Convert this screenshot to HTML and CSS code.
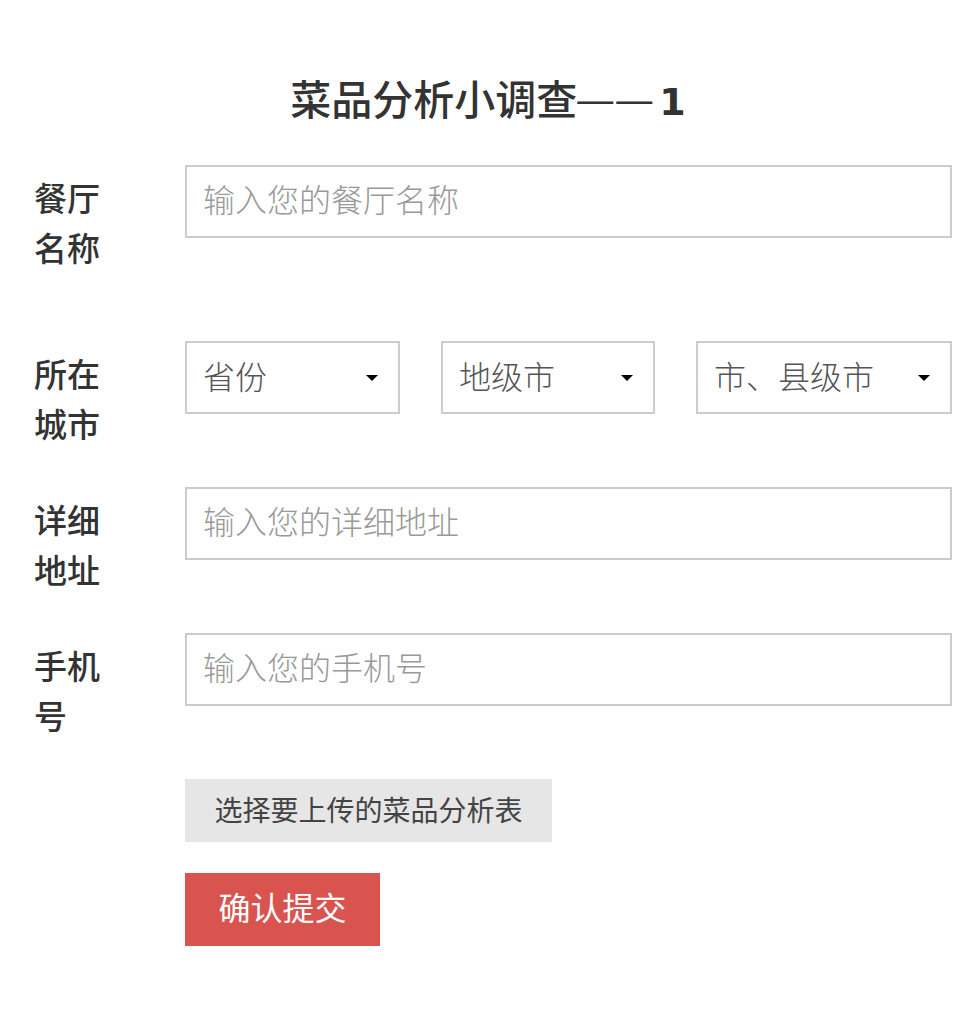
FILE: index.html
```html
<!DOCTYPE html>
<html lang="zh-CN">
<head>
<meta charset="utf-8">
<title>菜品分析小调查</title>
<link rel="stylesheet" href="styles.css">
</head>
<body>
<div class="page">
  <h1 class="title">菜品分析小调查<span class="title-dash">—</span><span class="title-dash">—</span><span class="title-num">1</span></h1>
  <form class="form">
    <div class="row row-first">
      <label class="label">餐厅名称</label>
      <input class="input" type="text" placeholder="输入您的餐厅名称">
    </div>
    <div class="row">
      <label class="label">所在城市</label>
      <div class="selects">
        <div class="select"><span>省份</span><span class="caret"></span></div>
        <div class="select"><span>地级市</span><span class="caret"></span></div>
        <div class="select"><span>市、县级市</span><span class="caret"></span></div>
      </div>
    </div>
    <div class="row">
      <label class="label">详细地址</label>
      <input class="input" type="text" placeholder="输入您的详细地址">
    </div>
    <div class="row">
      <label class="label">手机号</label>
      <input class="input" type="text" placeholder="输入您的手机号">
    </div>
    <div class="actions">
      <button type="button" class="btn-file">选择要上传的菜品分析表</button>
      <button type="button" class="btn-submit">确认提交</button>
    </div>
  </form>
</div>
</body>
</html>
```
FILE: styles.css
```css
html, body {
  margin: 0;
  padding: 0;
  background: #fff;
}
body {
  font-family: "Noto Sans CJK SC", "Noto Sans", sans-serif;
  color: #333;
}
.page {
  padding: 0 28px 60px 34px;
}
.title {
  height: 50px;
  margin: 72px 0 43px;
  font-size: 41px;
  line-height: 50px;
  font-weight: 500;
  text-align: center;
  color: #333;
  padding-right: 10px;
  white-space: nowrap;
}
.title-dash {
  font-family: "Liberation Sans", sans-serif;
  font-weight: normal;
  font-size: 36px;
  line-height: 0;
  margin-right: 3px;
  vertical-align: 3px;
}
.title-num {
  font-family: "DejaVu Sans", sans-serif;
  font-weight: bold;
  font-size: 38px;
  line-height: 0;
  margin-left: 4px;
}
.row {
  display: grid;
  grid-template-columns: 151px 1fr;
  align-items: start;
  margin-bottom: 39px;
}
.row-first {
  margin-bottom: 69px;
}
.label {
  width: 70px;
  padding-top: 7px;
  font-size: 33px;
  line-height: 50px;
  font-weight: 500;
  color: #333;
}
.input {
  box-sizing: border-box;
  width: 100%;
  height: 73px;
  margin: 0;
  padding: 0 16px 7px;
  border: 2px solid #ccc;
  border-radius: 0;
  font-family: inherit;
  font-size: 32px;
  font-weight: 300;
  color: #555;
  outline: none;
}
.input::placeholder {
  color: #999;
}
.selects {
  display: grid;
  grid-template-columns: 215px 214px 1fr;
  gap: 41px;
}
.select {
  box-sizing: border-box;
  height: 73px;
  border: 2px solid #ccc;
  padding: 0 20px 6px 16px;
  display: flex;
  align-items: center;
  justify-content: space-between;
  font-size: 32px;
  font-weight: 300;
  color: #555;
}
.caret {
  width: 0;
  height: 0;
  margin-top: 6px;
  border-left: 6px solid transparent;
  border-right: 6px solid transparent;
  border-top: 6px solid #000;
}
.actions {
  display: flex;
  flex-direction: column;
  align-items: flex-start;
  gap: 31px;
  margin-left: 151px;
}
.btn-file {
  box-sizing: border-box;
  height: 63px;
  width: 367px;
  border: none;
  border-radius: 0;
  background: #e6e6e6;
  color: #444;
  font-family: inherit;
  font-size: 28px;
  padding: 0 0 4px;
  cursor: pointer;
}
.btn-submit {
  box-sizing: border-box;
  height: 73px;
  width: 195px;
  border: none;
  border-radius: 0;
  background: #d9534f;
  color: #fff;
  font-family: inherit;
  font-size: 32px;
  padding: 0 0 7px;
  cursor: pointer;
}
```
